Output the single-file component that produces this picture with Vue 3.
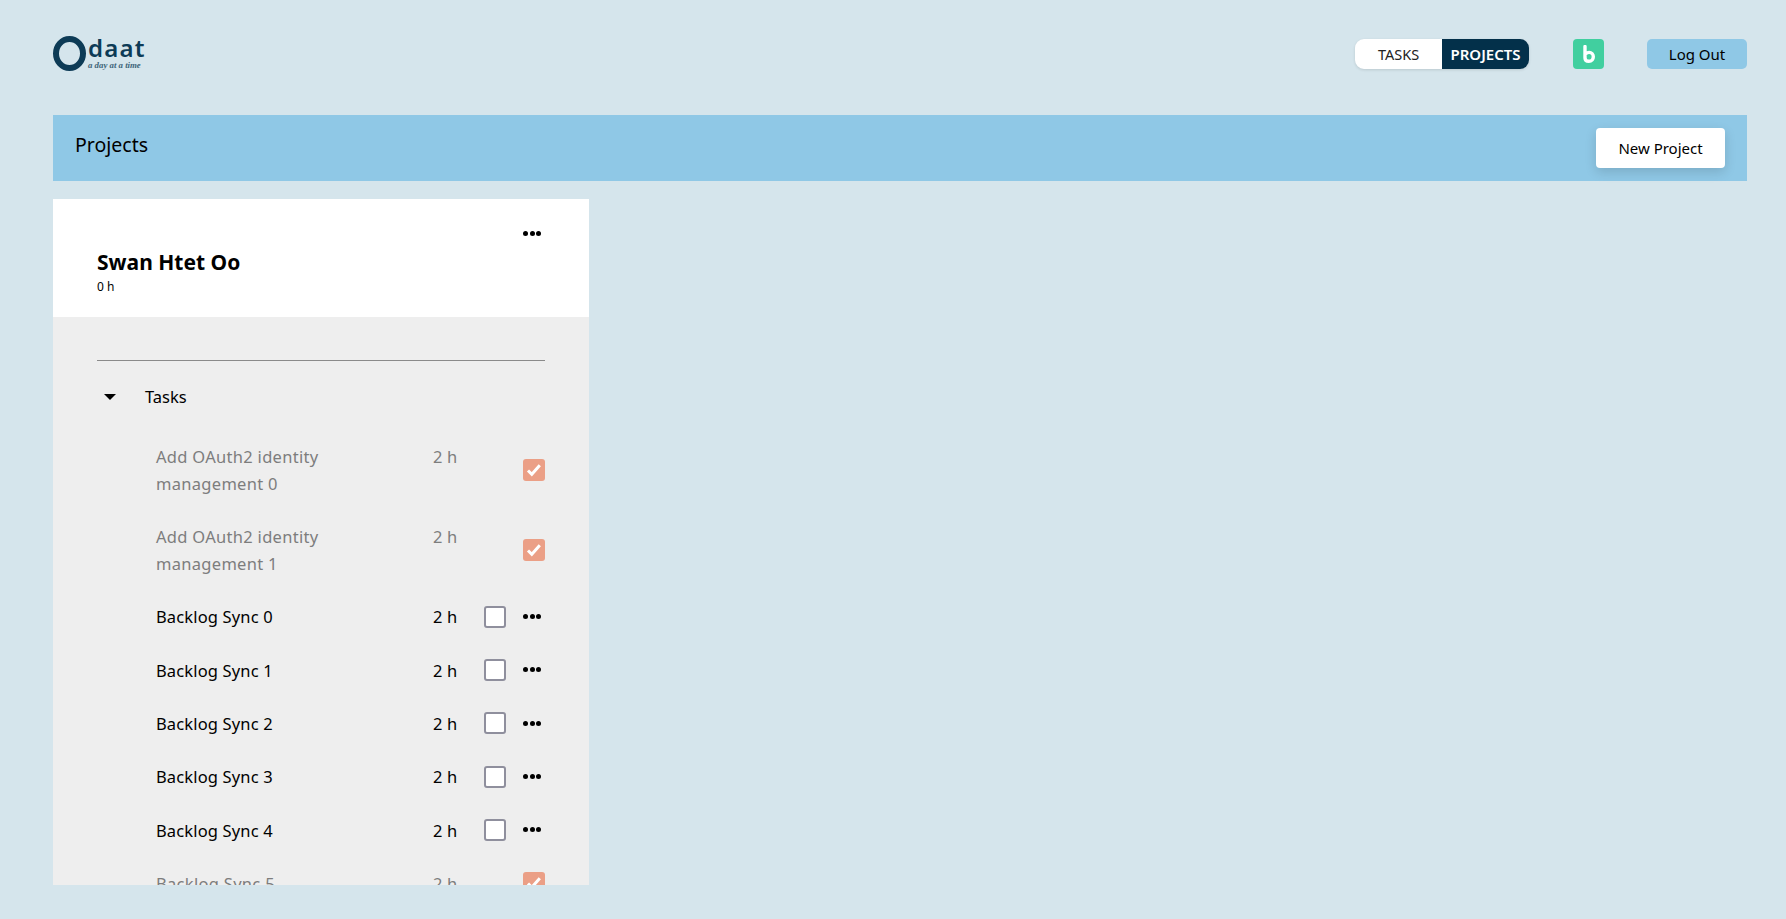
<script setup>
const rows = [
  { title: 'Add OAuth2 identity management 0', done: true },
  { title: 'Add OAuth2 identity management 1', done: true },
  { title: 'Backlog Sync 0', done: false },
  { title: 'Backlog Sync 1', done: false },
  { title: 'Backlog Sync 2', done: false },
  { title: 'Backlog Sync 3', done: false },
  { title: 'Backlog Sync 4', done: false },
  { title: 'Backlog Sync 5', done: true },
]
</script>

<template>
  <div class="page">
    <header class="top">
      <div class="logo">
        <svg class="logo-o" width="33" height="35" viewBox="0 0 33 35"><ellipse cx="16.5" cy="17.5" rx="13.500" ry="14.500" fill="none" stroke="#0d3b56" stroke-width="6"/></svg>
        <div class="logo-text">
          <div class="logo-name">daat</div>
          <div class="logo-tag">a day at a time</div>
        </div>
      </div>
      <nav class="nav">
        <div class="toggle">
          <span class="tab">TASKS</span>
          <span class="tab active">PROJECTS</span>
        </div>
        <div class="app-icon">
          <svg width="12" height="18" viewBox="0 0 12 18"><path d="M2 1.500V13c0 2 1.600 3.300 3.800 3.300 3 0 4.500-2.200 4.500-4.600 0-2.500-1.700-4.300-4.200-4.300-1.200 0-2.300.5-3.400 1.400" fill="none" stroke="#fff" stroke-width="3.400" stroke-linecap="round"/></svg>
        </div>
        <button class="logout">Log Out</button>
      </nav>
    </header>

    <section class="banner">
      <h1 class="banner-title">Projects</h1>
      <button class="new-project">New Project</button>
    </section>

    <article class="card">
      <div class="card-head">
        <div class="dots head-dots"><i></i><i></i><i></i></div>
        <h2 class="name">Swan Htet Oo</h2>
        <div class="total">0 h</div>
      </div>
      <div class="card-body">
        <hr class="divider" />
        <div class="tasks-head">
          <span class="caret"></span>
          <span>Tasks</span>
        </div>
        <div v-for="row in rows" :key="row.title" class="row" :class="{ done: row.done }">
          <div class="title">{{ row.title }}</div>
          <div class="hours">2 h</div>
          <div class="actions">
            <span v-if="row.done" class="check checked">
              <svg width="16" height="14" viewBox="0 0 16 14"><path d="M2 7.500l3.800 3.800 8-9" fill="none" stroke="#fff" stroke-width="3"/></svg>
            </span>
            <template v-else>
              <span class="check"></span>
              <div class="dots"><i></i><i></i><i></i></div>
            </template>
          </div>
        </div>
      </div>
    </article>
  </div>
</template>

<style>
html, body { margin: 0; background: #d5e5ec; }
</style>

<style scoped>
.page {
  height: 919px;
  box-sizing: border-box;
  padding: 0 39px 0 53px;
  background: #d5e5ec;
  font-family: "Noto Sans", sans-serif;
  color: #000;
  overflow: hidden;
}
.top {
  height: 115px;
  box-sizing: border-box;
  padding-top: 36px;
  display: flex;
  justify-content: space-between;
  align-items: flex-start;
}
.logo { display: flex; gap: 2px; }
.logo-o { display: block; }
.logo-name {
  font-size: 24px;
  line-height: 24px;
  letter-spacing: 1.200px;
  color: #0d3b56;
  font-weight: 600;
}
.logo-tag {
  font-family: "Liberation Serif", serif;
  font-style: italic;
  font-size: 8.800px;
  line-height: 10px;
  font-weight: 700;
  color: #3d6479;
}
.nav { display: flex; align-items: center; margin-top: 3px; }
.toggle {
  display: flex;
  width: 174px;
  height: 30px;
  border-radius: 9px;
  overflow: hidden;
  background: #fff;
  box-shadow: 0 1px 3px rgba(0, 0, 0, 0.12);
}
.tab {
  width: 87px;
  display: flex;
  align-items: center;
  justify-content: center;
  font-size: 14.500px;
  color: #222;
}
.tab.active { background: #03304a; color: #fff; font-weight: 600; font-size: 15px; }
.app-icon {
  width: 31px;
  height: 30px;
  margin-left: 44px;
  border-radius: 4px;
  background: #41cf9f;
  display: flex;
  align-items: center;
  justify-content: center;
}
.logout {
  width: 100px;
  height: 30px;
  margin-left: 43px;
  border: 0;
  padding: 0;
  border-radius: 5px;
  background: #8fc8e6;
  font: inherit;
  font-size: 15px;
  color: #000;
}
.banner {
  height: 66px;
  box-sizing: border-box;
  padding: 13px 22px;
  background: #8fc8e6;
  display: flex;
  justify-content: space-between;
  align-items: flex-start;
}
.banner-title {
  margin: 0;
  padding-top: 2px;
  font-size: 19.500px;
  line-height: 30px;
  font-weight: 400;
}
.new-project {
  width: 129px;
  height: 40px;
  border: 0;
  padding: 0;
  border-radius: 4px;
  background: #fff;
  font: inherit;
  font-size: 15px;
  color: #000;
  box-shadow: 0 4px 12px rgba(0, 0, 0, 0.14);
}
.card {
  width: 536px;
  height: 686px;
  margin-top: 18px;
  overflow: hidden;
  background: #eee;
}
.card-head {
  height: 118px;
  box-sizing: border-box;
  padding: 49px 44px 0;
  background: #fff;
  position: relative;
}
.head-dots { position: absolute; top: 32px; right: 48px; }
.name {
  margin: 0;
  font-size: 21px;
  line-height: 28px;
  font-weight: 700;
}
.total { font-size: 12px; line-height: 17px; margin-top: 2px; }
.card-body { padding: 0 44px; }
.divider {
  margin: 0;
  position: relative;
  top: 43px;
  border: 0;
  border-top: 1px solid #8a8a8a;
}
.tasks-head {
  padding-top: 65px;
  height: 27px;
  display: flex;
  align-items: center;
  font-size: 16.500px;
  line-height: 27px;
  padding-bottom: 21px;
  box-sizing: content-box;
}
.caret {
  width: 0;
  height: 0;
  margin-left: 7px;
  margin-right: 29px;
  border-left: 6px solid transparent;
  border-right: 6px solid transparent;
  border-top: 6px solid #000;
}
.row {
  display: flex;
  align-items: flex-start;
  padding: 13.33px 0 13.34px 59px;
  font-size: 16.500px;
  letter-spacing: 0.150px;
  line-height: 26.67px;
}
.row.done { color: #7d7d7d; }
.row.done .title { letter-spacing: 0.300px; }
.title { width: 220px; margin-right: 57px; }
.hours { width: 51px; white-space: nowrap; }
.actions {
  flex: 1;
  align-self: center;
  margin-top: -2px;
  display: flex;
  align-items: center;
  justify-content: space-between;
}
.done .actions { justify-content: flex-end; }
.check {
  width: 22px;
  height: 22px;
  box-sizing: border-box;
  border: 2px solid #8f8f9d;
  border-radius: 3px;
  background: #fff;
  display: flex;
  align-items: center;
  justify-content: center;
}
.check.checked { border: 0; background: #eb9f86; }
.dots { display: flex; gap: 1.500px; width: 18px; margin-right: 4px; }
.dots i { width: 5px; height: 5px; border-radius: 50%; background: #000; }
.head-dots { margin-right: 0; }
</style>
